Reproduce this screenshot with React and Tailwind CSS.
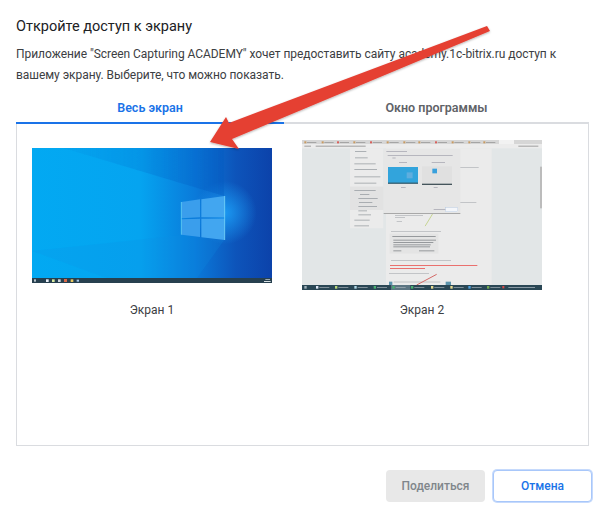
import React from 'react'

const SANS = 'font-["Roboto","Noto_Sans",sans-serif]'

const Lines = ({ items, color = '#8b9196', h = 3 }) =>
  items.map(([x, y, w], i) => <rect key={i} x={x} y={y} width={w} height={h} fill={color} opacity="0.65" />)

const WallpaperThumb = () => (
  <svg viewBox="36 21 720 405" className="w-[240px] h-[135px] block">
    <defs>
      <linearGradient id="wall" x1="0" x2="1" y1="0" y2="0">
        <stop offset="0" stopColor="#02a9f2" />
        <stop offset="0.45" stopColor="#05a4f0" />
        <stop offset="0.68" stopColor="#0a7ada" />
        <stop offset="0.85" stopColor="#0d54ba" />
        <stop offset="1" stopColor="#0c42aa" />
      </linearGradient>
      <radialGradient id="glow" cx="615" cy="215" r="95" gradientUnits="userSpaceOnUse">
        <stop offset="0" stopColor="#1c9ef6" stopOpacity="0.9" />
        <stop offset="1" stopColor="#1c9ef6" stopOpacity="0" />
      </radialGradient>
      <linearGradient id="wedge" x1="130" x2="612" y1="0" y2="0" gradientUnits="userSpaceOnUse">
        <stop offset="0" stopColor="#0b58c0" stopOpacity="0.04" />
        <stop offset="1" stopColor="#0b58c0" stopOpacity="0.35" />
      </linearGradient>
      <filter id="soft"><feGaussianBlur stdDeviation="2" /></filter>
    </defs>
    <rect x="36" y="21" width="720" height="405" fill="url(#wall)" />
    <rect x="36" y="21" width="720" height="405" fill="url(#glow)" />
    <polygon points="130,21 612,165 612,21" fill="url(#wedge)" filter="url(#soft)" />
    <polygon points="484,282 612,298 520,426 300,426 36,330" fill="#0a90e4" opacity="0.2" filter="url(#soft)" />
    <polygon points="484,183 540,175 540,229 484,232" fill="#3a9eec" />
    <polygon points="544,175 614,165 614,229 544,229" fill="#42a6f0" />
    <polygon points="484,235 540,233 540,288 484,281" fill="#3a9eec" />
    <polygon points="544,233 614,233 614,297 544,289" fill="#42a6f0" />
    <polyline points="484,183 484,281" stroke="#6fdcf6" strokeWidth="2" fill="none" />
    <polyline points="614,165 614,297" stroke="#8ae4fa" strokeWidth="2" fill="none" />
    <rect x="36" y="411" width="720" height="15" fill="#27404f" />
    <rect x="42" y="415" width="6" height="7" fill="#b8c4cc" />
    <rect x="78" y="415" width="8" height="8" fill="#e8eef8" />
    <rect x="96" y="415" width="8" height="8" fill="#d8e8a0" />
    <rect x="114" y="415" width="8" height="8" fill="#d0d8dc" />
    <rect x="132" y="414" width="9" height="9" fill="#d86848" />
    <rect x="152" y="415" width="8" height="8" fill="#e8c860" />
    <rect x="170" y="416" width="7" height="6" fill="#a8c8e8" />
    <rect x="736" y="414" width="14" height="2" fill="#d8e0e4" />
    <rect x="732" y="420" width="20" height="3" fill="#d8e0e4" />
  </svg>
)

const DesktopThumb = () => (
  <svg viewBox="21 15 720 450" className="w-[240px] h-[150px] block">
    <defs>
      <filter id="thumbBlur" x="0" y="0" width="100%" height="100%"><feGaussianBlur stdDeviation="1.5" /></filter>
      <clipPath id="thumbClip"><rect x="21" y="15" width="720" height="450" /></clipPath>
    </defs>
    <g clipPath="url(#thumbClip)">
      <g filter="url(#thumbBlur)">
        <rect x="21" y="15" width="720" height="450" fill="#e2e6e7" />
        <rect x="21" y="15" width="720" height="12" fill="#d6d6d6" />
        {[28, 80, 126, 175, 225, 275, 325, 370, 420, 470, 520, 565, 612].map((x) => (
          <g key={x}>
            <rect x={x} y="19" width="6" height="6" fill={x % 3 === 0 ? '#d8605c' : '#c89a60'} />
            <rect x={x + 8} y="21" width="28" height="2" fill="#8d8d8d" />
          </g>
        ))}
        <rect x="612" y="15" width="45" height="12" fill="#f2f2f2" />
        <rect x="21" y="27" width="720" height="13" fill="#ececec" />
        <Lines items={[[28, 32, 20], [62, 32, 150], [670, 32, 60]]} color="#777" />
        <rect x="165" y="40" width="100" height="240" fill="#ebebeb" />
        <rect x="165" y="155" width="100" height="70" fill="#e2e2e2" />
        <Lines
          items={[[180, 48, 34], [180, 67, 38], [178, 85, 64], [178, 102, 68], [178, 124, 78], [178, 143, 66], [178, 165, 64], [195, 177, 28], [190, 189, 58], [192, 201, 40], [190, 213, 56], [190, 226, 26], [190, 238, 38], [178, 254, 46], [178, 271, 44]]}
        />
        <rect x="273" y="40" width="317" height="410" fill="#ebebeb" />
        <rect x="266" y="42" width="230" height="194" fill="#e6e6e6" />
        <rect x="266" y="234" width="230" height="3" fill="#a8a8a8" />
        <Lines items={[[274, 48, 62], [278, 60, 195], [292, 68, 10], [312, 81, 24], [410, 81, 40], [318, 157, 14], [416, 156, 12], [416, 223, 36]]} h={2} color="#778" />
        <rect x="279" y="96" width="90" height="50" fill="#30a4dc" />
        <rect x="335" y="112" width="18" height="18" fill="#5eaede" />
        <rect x="279" y="143" width="90" height="3" fill="#3a4a50" />
        <rect x="381" y="94" width="90" height="56" fill="#e0e0e0" />
        <rect x="412" y="101" width="14" height="14" fill="#38a0dc" />
        <rect x="381" y="146" width="90" height="4" fill="#44545c" />
        <rect x="452" y="218" width="36" height="12" fill="#f4f6fa" stroke="#a8c4e4" />
        <Lines items={[[496, 97, 55], [496, 201, 48], [300, 240, 84], [300, 247, 30], [305, 258, 16], [288, 288, 150], [288, 376, 180], [282, 414, 120], [296, 440, 140]]} h={2} />
        <rect x="284" y="296" width="146" height="60" fill="#e4e4e4" />
        <Lines items={[[292, 303, 130], [295, 314, 128], [295, 321, 120], [295, 328, 112], [295, 334, 110], [295, 346, 24], [372, 346, 46]]} h={3} color="#6b7074" />
        <polyline points="412,238 390,274" stroke="#b8cc70" strokeWidth="3" strokeDasharray="5 2" fill="none" />
        <rect x="285" y="390" width="262" height="3" fill="#ea5a58" opacity="0.85" />
        <rect x="285" y="399" width="105" height="3" fill="#ea5a58" opacity="0.85" />
        <rect x="282" y="440" width="10" height="12" fill="#5b94ac" />
        <rect x="452" y="440" width="16" height="12" fill="#5b94ac" />
        <polyline points="365,450 425,418" stroke="#d46a68" strokeWidth="3" fill="none" />
        <rect x="735" y="95" width="6" height="125" fill="#bcbcbc" />
        <rect x="21" y="450" width="720" height="15" fill="#2c4654" />
        <rect x="288" y="450" width="58" height="15" fill="#5c7482" />
        {[28, 63, 120, 178, 236, 292, 348, 408, 466, 520, 576].map((x, i) => (
          <g key={x}>
            <rect x={x} y="453" width="7" height="8" fill={['#9fb0ba', '#dfe8f8', '#b8d878', '#b0d8e8', '#48b070', '#48b070', '#48b070', '#e8dc90', '#e8dc90', '#4ca0e0', '#70a850'][i]} />
            <rect x={x + 10} y="456" width={i === 0 ? 0 : 30} height="2" fill="#a8b4bc" />
          </g>
        ))}
        <rect x="622" y="453" width="6" height="7" fill="#d84848" />
        <rect x="640" y="456" width="80" height="2" fill="#b8c4cc" />
      </g>
    </g>
  </svg>
)

const ScreenCard = ({ label, children }) => (
  <div className="w-[270px] flex flex-col items-center">
    <div className="h-[166px] flex items-center justify-center">{children}</div>
    <div className="mt-[3px] text-[12px] leading-[18px] text-[#3c4043]">{label}</div>
  </div>
)

const App = () => {
  return (
    <div className={`relative w-[605px] h-[517px] bg-white overflow-hidden pt-[17px] ${SANS}`}>
      <h1 className="ml-[16px] text-[14.5px] leading-[20px] text-[#202124]">Откройте доступ к экрану</h1>
      <p className="ml-[16px] mt-[7px] w-[565px] text-[12px] tracking-[-0.05px] leading-[21px] text-[#3c4043]">
        Приложение "Screen Capturing ACADEMY" хочет предоставить сайту academy.1c-bitrix.ru доступ к вашему экрану. Выберите, что можно показать.
      </p>

      <div className="ml-[16px] mt-[8px] w-[573px] flex text-[12.5px] font-semibold">
        <div className="w-[268px] h-[30px] flex items-center justify-center text-[#1a73e8] border-b-2 border-[#1a73e8]">Весь экран</div>
        <div className="flex-1 h-[30px] flex items-center justify-center text-[#5f6368] border-b-2 border-[#dadce0]">Окно программы</div>
      </div>

      <div className="ml-[16px] w-[573px] h-[322px] border-x border-b border-[#dadce0] flex items-start pt-[8px]">
        <ScreenCard label="Экран 1"><WallpaperThumb /></ScreenCard>
        <ScreenCard label="Экран 2"><DesktopThumb /></ScreenCard>
      </div>

      <div className="mt-[24px] mr-[13px] flex justify-end gap-[8px] text-[12px] font-medium">
        <button className="w-[99px] h-[32px] rounded-[4px] bg-[#e8e8e8] text-[#80868b]">Поделиться</button>
        <button className="w-[99px] h-[32px] rounded-[4px] bg-white text-[#1a73e8] border border-[#a8c7fa] ring-1 ring-[#c6dafc]">Отмена</button>
      </div>

      <svg className="absolute left-0 top-0 pointer-events-none" width="605" height="517" viewBox="0 0 605 517">
        <defs>
          <filter id="arrowShadow" x="-10%" y="-10%" width="120%" height="130%">
            <feDropShadow dx="0" dy="1" stdDeviation="1" floodColor="#000" floodOpacity="0.3" />
          </filter>
        </defs>
        <polygon
          points="487,26 490,31 232,139 239,149 210,142 226,117 229,123"
          fill="#e53f33"
          filter="url(#arrowShadow)"
        />
      </svg>
    </div>
  )
}

export default App
